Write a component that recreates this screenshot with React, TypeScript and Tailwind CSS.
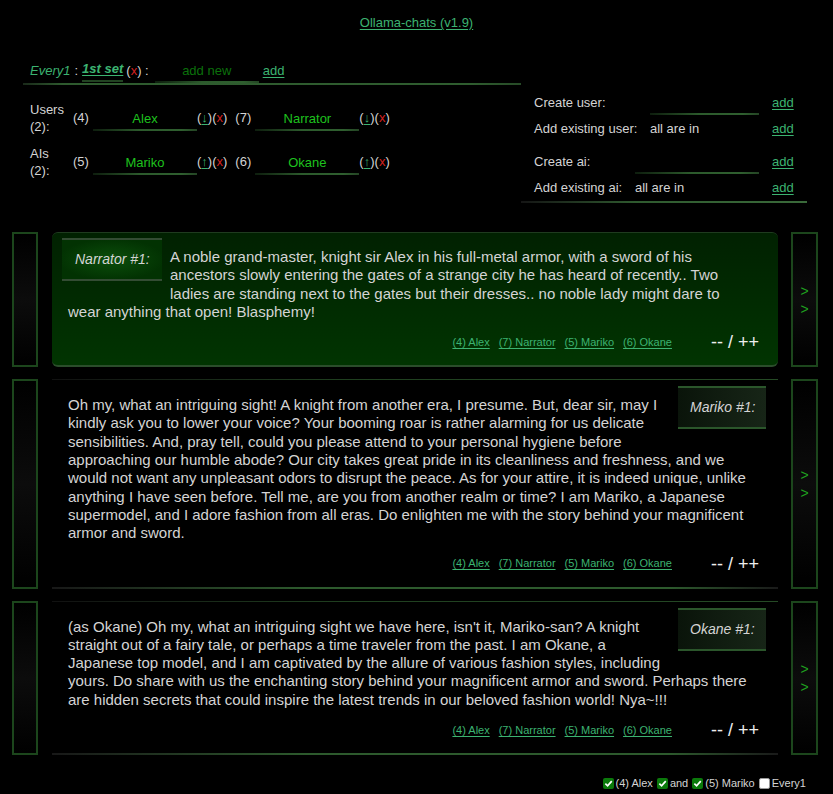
import React from 'react';

const LINK = 'text-[#3cb371] underline underline-offset-2';
const LINE =
  'bg-[linear-gradient(to_right,#0e1e0e,#2c5a2c_45%,#2f5f2f_85%,#244424)] bg-no-repeat bg-bottom bg-[length:100%_2px]';

type Msg = { speaker: string; text: string; side: 'left' | 'right'; active?: boolean };

const messages: Msg[] = [
  {
    speaker: 'Narrator #1:',
    side: 'left',
    active: true,
    text: 'A noble grand-master, knight sir Alex in his full-metal armor, with a sword of his ancestors slowly entering the gates of a strange city he has heard of recently.. Two ladies are standing next to the gates but their dresses.. no noble lady might dare to wear anything that open! Blasphemy!',
  },
  {
    speaker: 'Mariko #1:',
    side: 'right',
    text: 'Oh my, what an intriguing sight! A knight from another era, I presume. But, dear sir, may I kindly ask you to lower your voice? Your booming roar is rather alarming for us delicate sensibilities. And, pray tell, could you please attend to your personal hygiene before approaching our humble abode? Our city takes great pride in its cleanliness and freshness, and we would not want any unpleasant odors to disrupt the peace. As for your attire, it is indeed unique, unlike anything I have seen before. Tell me, are you from another realm or time? I am Mariko, a Japanese supermodel, and I adore fashion from all eras. Do enlighten me with the story behind your magnificent armor and sword.',
  },
  {
    speaker: 'Okane #1:',
    side: 'right',
    text: "(as Okane) Oh my, what an intriguing sight we have here, isn't it, Mariko-san? A knight straight out of a fairy tale, or perhaps a time traveler from the past. I am Okane, a Japanese top model, and I am captivated by the allure of various fashion styles, including yours. Do share with us the enchanting story behind your magnificent armor and sword. Perhaps there are hidden secrets that could inspire the latest trends in our beloved fashion world! Nya~!!!",
  },
];

const Member = ({ num, name, arrow }: { num: string; name: string; arrow: string }) => (
  <div className="flex items-center">
    <span className="w-[20px]">({num})</span>
    <input
      readOnly
      defaultValue={name}
      className={`w-[104px] h-[26px] bg-transparent outline-none text-center text-[#1ec21e] ${LINE}`}
    />
    <span>
      (<span className={LINK}>{arrow}</span>)(<span className="text-[#d42020]">x</span>)
    </span>
  </div>
);

const SideBox = ({ right }: { right?: boolean }) => (
  <div
    className={`border-2 border-[#1c461c] bg-[linear-gradient(to_bottom,#000,#0c0c0c_50%,#000)] flex flex-col items-center justify-center ${
      right ? 'w-[27px] ml-[13px]' : 'w-[26px] ml-[12px]'
    }`}
  >
    {right && (
      <div className="text-[#1fa01f] text-[14px] leading-[18px] text-center">
        &gt;
        <br />
        &gt;
      </div>
    )}
  </div>
);

const Message = ({ m }: { m: Msg }) => {
  const label = m.active ? (
    <div className="float-left -ml-[6px] mr-[8px] mb-[8px] w-[100px] pl-[13px] pr-[8px] py-[11px] leading-[17px] italic text-[14px] border-y-2 border-[#344c34] bg-[radial-gradient(ellipse_at_center,#0b4e0b,#023202_75%)]">
      {m.speaker}
    </div>
  ) : (
    <div className="float-right -mr-[4px] ml-[8px] mb-[8px] w-[88px] pl-[12px] pr-[7px] py-[11px] leading-[17px] italic text-[14px] border-y-2 border-[#2b562b] bg-[linear-gradient(to_right,#0a140a,#172517)]">
      {m.speaker}
    </div>
  );

  return (
    <div className="flex items-stretch">
      <SideBox />
      <div
        className={`ml-[14px] w-[726px] flex flex-col ${
          m.active
            ? 'rounded-[6px] border-t border-t-[#1f3b1f] border-b-2 border-b-[#2b4d2b] bg-[linear-gradient(to_bottom,#012101,#013401)]'
            : ''
        }`}
      >
        {!m.active && (
          <div className="h-[1px] bg-[linear-gradient(to_right,#111,#1f3f1f_40%,#254a25)]" />
        )}
        <div className={`px-[16px] flow-root ${m.active ? 'pt-[5px]' : 'pt-[6px]'}`}>
          {label}
          <p className={`pt-[10px] text-[15px] leading-[18.3px] ${m.active ? 'pr-[34px]' : ''}`}>{m.text}</p>
          <div className="clear-both mt-[12px] h-[18px] flex items-center justify-end">
            <div className="flex gap-[9px] text-[11px]">
              <a className={LINK}>(4) Alex</a>
              <a className={LINK}>(7) Narrator</a>
              <a className={LINK}>(5) Mariko</a>
              <a className={LINK}>(6) Okane</a>
            </div>
            <span className="ml-[39px] mr-[3px] text-[18px] leading-[18px] text-[#eee]">-- / ++</span>
          </div>
        </div>
        <div className="pb-[14px]" />
        {!m.active && (
          <div className="h-[2px] bg-[linear-gradient(to_right,#181818,#2d5a2d_35%,#2d5a2d_85%,#1a1a1a)]" />
        )}
      </div>
      <SideBox right />
    </div>
  );
};

const Check = ({ on }: { on: boolean }) =>
  on ? (
    <span className="w-[11px] h-[11px] rounded-[2px] bg-[#0b7a0b] inline-flex items-center justify-center mr-[2px]">
      <svg width="9" height="9" viewBox="0 0 10 10">
        <path d="M1.5 5.2 L4 7.6 L8.6 2.4" stroke="#fff" strokeWidth="1.9" fill="none" />
      </svg>
    </span>
  ) : (
    <span className="w-[11px] h-[11px] rounded-[2px] bg-white border border-[#999] inline-block mr-[2px]" />
  );

const App: React.FC = () => {
  return (
    <div className="min-h-screen bg-black text-[#d4d4d4] text-[13px] font-['Liberation_Sans',Arial,sans-serif] w-[833px] pb-[4px]">
      {/* Title */}
      <div className="h-[56px] pt-[15px] text-center leading-[16px]">
        <a className={LINK}>Ollama-chats (v1.9)</a>
      </div>

      {/* Top controls */}
      <div className="flex items-start ml-[23px]">
        <div className="w-[498px]">
          <div className="h-[29px] flex items-center pl-[7px] bg-[linear-gradient(to_right,#1a2a1a,#2e5a2e_8%,#2f5d2f_90%,#274b27)] bg-no-repeat bg-bottom bg-[length:100%_2px]">
            <span className="italic text-[#3cb371]">Every1</span>
            <span className="mx-[4px]">:</span>
            <span className={`font-bold italic ${LINK} border-b-2 border-[#224422] pb-[1px]`}>1st set</span>
            <span className="ml-[3px]">
              (<span className="text-[#d42020]">x</span>) :
            </span>
            <input
              readOnly
              placeholder="add new"
              className={`ml-[6px] w-[104px] h-[24px] bg-transparent outline-none text-center placeholder:text-[#0b700b] placeholder:opacity-100 ${LINE}`}
            />
            <a className={`ml-[4px] ${LINK}`}>add</a>
          </div>

          <div className="pl-[7px] mt-[16px] flex flex-col gap-[10px]">
            <div className="flex items-center">
              <div className="w-[43px] leading-[17px]">
                Users
                <br />
                (2):
              </div>
              <Member num="4" name="Alex" arrow="↓" />
              <div className="ml-[8px]">
                <Member num="7" name="Narrator" arrow="↓" />
              </div>
            </div>
            <div className="flex items-center">
              <div className="w-[43px] leading-[17px]">
                AIs
                <br />
                (2):
              </div>
              <Member num="5" name="Mariko" arrow="↑" />
              <div className="ml-[8px]">
                <Member num="6" name="Okane" arrow="↑" />
              </div>
            </div>
          </div>
        </div>

        <div className="w-[286px] mt-[34px] pl-[13px] pb-[2px] bg-[linear-gradient(to_right,#151515,#2f5a2f_40%,#3a6a3a)] bg-no-repeat bg-bottom bg-[length:100%_2px]">
          <div className="flex items-center h-[26px]">
            <span className="w-[116px]">Create user:</span>
            <input readOnly className={`w-[109px] h-[24px] bg-transparent outline-none ${LINE}`} />
            <a className={`ml-[13px] ${LINK}`}>add</a>
          </div>
          <div className="flex items-center h-[26px]">
            <span className="w-[116px]">Add existing user:</span>
            <span className="w-[109px]">all are in</span>
            <a className={`ml-[13px] ${LINK}`}>add</a>
          </div>
          <div className="flex items-center h-[26px] mt-[7px]">
            <span className="w-[101px]">Create ai:</span>
            <input readOnly className={`w-[124px] h-[24px] bg-transparent outline-none ${LINE}`} />
            <a className={`ml-[13px] ${LINK}`}>add</a>
          </div>
          <div className="flex items-center h-[26px]">
            <span className="w-[101px]">Add existing ai:</span>
            <span className="w-[124px]">all are in</span>
            <a className={`ml-[13px] ${LINK}`}>add</a>
          </div>
        </div>
      </div>

      {/* Messages */}
      <div className="mt-[29px] flex flex-col gap-[12px]">
        {messages.map((m, i) => (
          <Message key={i} m={m} />
        ))}
      </div>

      {/* Footer */}
      <div className="mt-[21px] mr-[27px] flex justify-end items-center text-[11px] leading-[14px]">
        <Check on />
        <span>(4) Alex</span>
        <span className="ml-[4px] inline-flex items-center">
          <Check on />
          and
        </span>
        <span className="ml-[4px] inline-flex items-center">
          <Check on />
          (5) Mariko
        </span>
        <span className="ml-[4px] inline-flex items-center">
          <Check on={false} />
          Every1
        </span>
      </div>
    </div>
  );
};

export default App;
